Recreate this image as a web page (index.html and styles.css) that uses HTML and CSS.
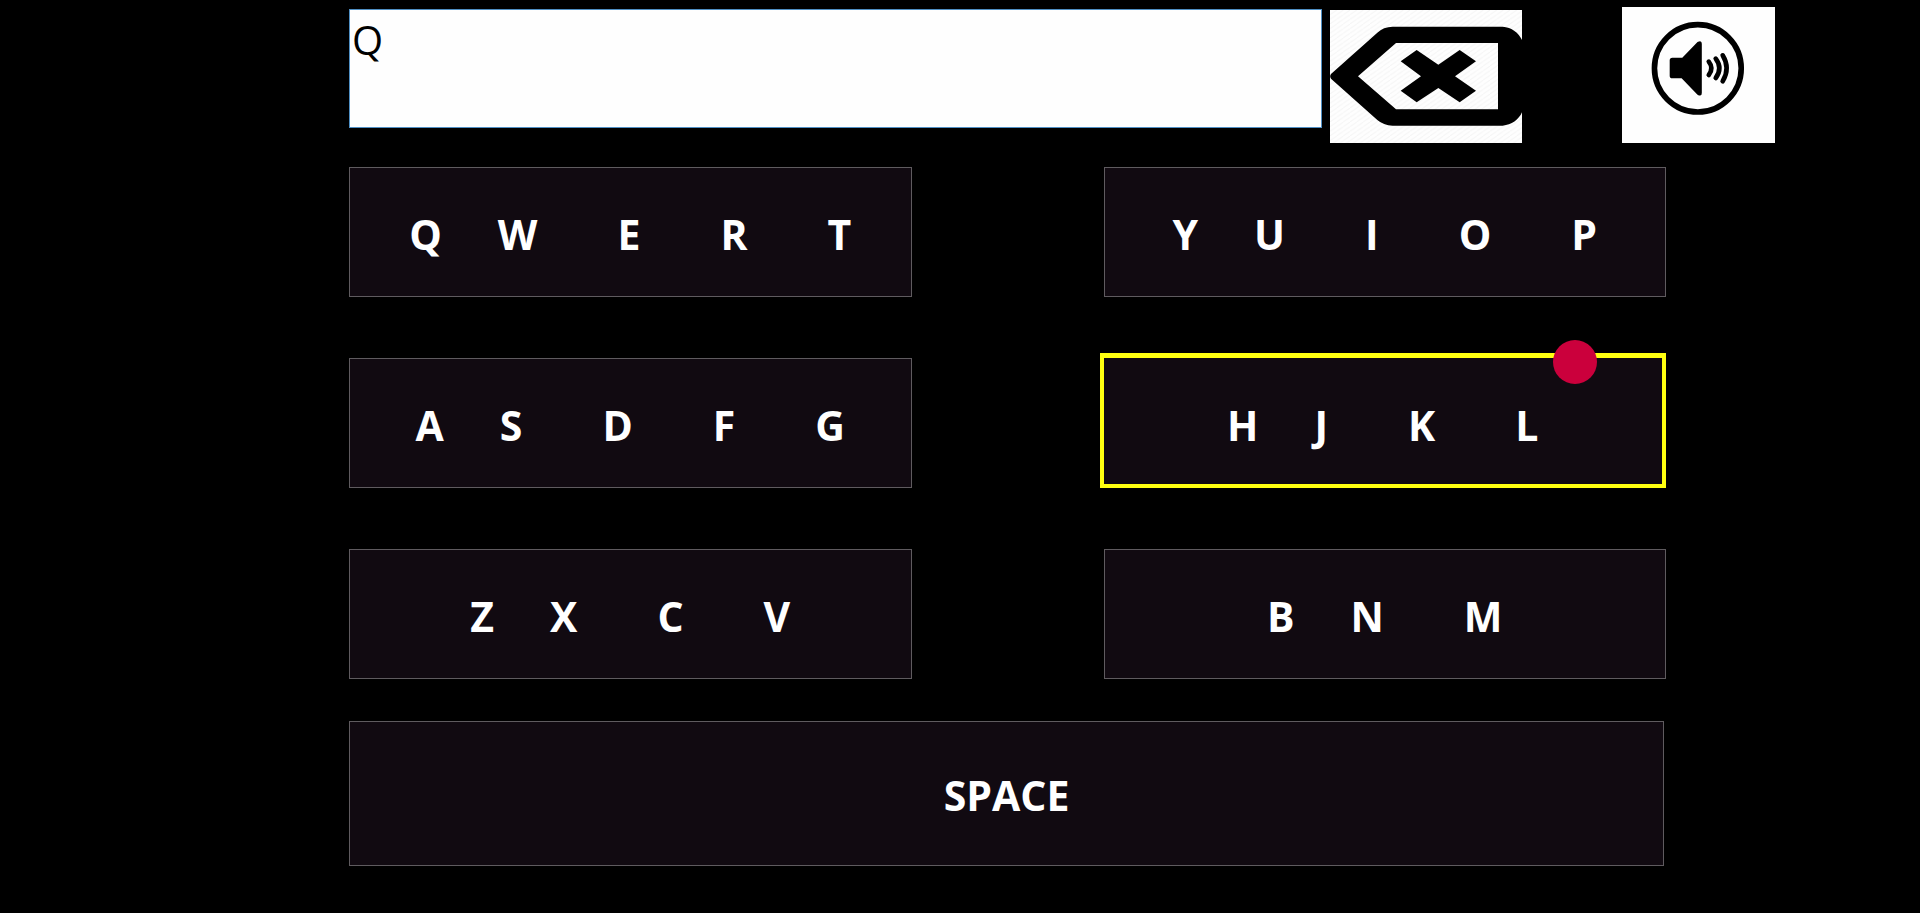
FILE: index.html
```html
<!DOCTYPE html>
<html lang="en">
<head>
<meta charset="utf-8">
<title>Gaze keyboard</title>
<link rel="stylesheet" href="styles.css">
</head>
<body>
<header class="toolbar">
  <textarea class="output" aria-label="Typed text" spellcheck="false">Q</textarea>
  <button class="tool backspace" type="button" aria-label="Backspace">
    <svg viewBox="0 0 576 399" preserveAspectRatio="none" aria-hidden="true">
      <defs>
        <pattern id="hatch" width="20" height="14" patternUnits="userSpaceOnUse">
          <path d="M-2 15.400L22 -1.400" stroke="#f5f5f5" stroke-width="3"/>
        </pattern>
      </defs>
      <rect width="576" height="399" fill="#fefefe"/>
      <rect width="576" height="399" fill="url(#hatch)"/>
      <path fill="#000" fill-rule="evenodd" d="M3 192L142 68Q160 50 188 50H518C545 52 566 68 576 90V307C566 329 545 345 518 347H188Q160 346 142 330L3 206Q-2 199 3 192ZM84 199L198 298H504V99H198Z"/>
      <path fill="#000" d="M260 120L325 164L389 120L438 154L375 199L438 242L389 277L325 234L260 277L212 242L273 199L212 154Z"/>
    </svg>
  </button>
  <button class="tool speak" type="button" aria-label="Speak">
    <svg viewBox="0 0 462 408" preserveAspectRatio="none" aria-hidden="true">
      <rect width="462" height="408" fill="#fefefe"/>
      <circle cx="229" cy="184" r="131" fill="none" stroke="#000" stroke-width="17"/>
      <path fill="#000" d="M152 152H182L228 105Q241 98 241 110V258Q241 270 228 263L180 214H152Q144 214 144 206V160Q144 152 152 152Z"/>
      <path fill="none" stroke="#000" stroke-width="14" stroke-linecap="round" d="M262 164Q278 184 262 204M283 155Q305 184 283 213M304 145Q328 184 304 223"/>
    </svg>
  </button>
</header>
<main class="keyboard">
  <button class="group" type="button"><span>Q</span><span>W</span><span>E</span><span>R</span><span>T</span></button>
  <button class="group" type="button"><span>Y</span><span>U</span><span>I</span><span>O</span><span>P</span></button>
  <button class="group" type="button"><span>A</span><span>S</span><span>D</span><span>F</span><span>G</span></button>
  <button class="group selected" type="button"><span>H</span><span>J</span><span>K</span><span>L</span><i class="gaze"></i></button>
  <button class="group" type="button"><span>Z</span><span>X</span><span>C</span><span>V</span></button>
  <button class="group" type="button"><span>B</span><span>N</span><span>M</span></button>
  <button class="group space" type="button">SPACE</button>
</main>
</body>
</html>
```
FILE: styles.css
```css
* {
  box-sizing: border-box;
}

body {
  margin: 0;
  background: #000;
  font-family: "Open Sans", "Noto Sans", sans-serif;
}

.toolbar {
  display: flex;
  align-items: flex-start;
  padding: 7px 145px 0 349px;
}

.output {
  flex: 1;
  min-width: 0;
  height: 119px;
  margin: 2px 8px 0 0;
  padding: 0 2px;
  border: 1px solid #4f8fc4;
  border-radius: 0;
  outline: none;
  resize: none;
  overflow: hidden;
  background: #fefefe;
  color: #000;
  font: 400 40px/60px "Open Sans", "Noto Sans", sans-serif;
}

.tool {
  flex: none;
  padding: 0;
  border: 0;
  background: #fefefe;
}

.tool svg {
  display: block;
  width: 100%;
  height: 100%;
}

.backspace {
  width: 192px;
  height: 133px;
  margin-top: 3px;
}

.speak {
  width: 153px;
  height: 136px;
  margin-left: 100px;
}

.keyboard {
  display: grid;
  grid-template-columns: 1fr 1fr;
  gap: 61px 192px;
  padding: 24px 254px 0 349px;
}

.group {
  position: relative;
  display: flex;
  align-items: center;
  justify-content: center;
  gap: 80px;
  min-height: 130px;
  padding: 4px 0 0;
  border: 1px solid #5f5b5f;
  border-radius: 0;
  background: #110a11;
  color: #fff;
  font: 700 41px/54px "Open Sans", "Noto Sans", sans-serif;
}

.group span:first-child {
  margin-right: -24px;
}

.selected {
  margin: -5px 0 0 -4px;
  padding-top: 8px;
  border: 4px solid #ffff10;
  border-top-width: 5px;
}

.gaze {
  position: absolute;
  top: -18px;
  right: 65px;
  width: 44px;
  height: 44px;
  border-radius: 50%;
  background: #cb003c;
}

.space {
  grid-column: 1 / -1;
  min-height: 145px;
  margin: -19px 2px 0 0;
  padding-top: 2px;
}
```
